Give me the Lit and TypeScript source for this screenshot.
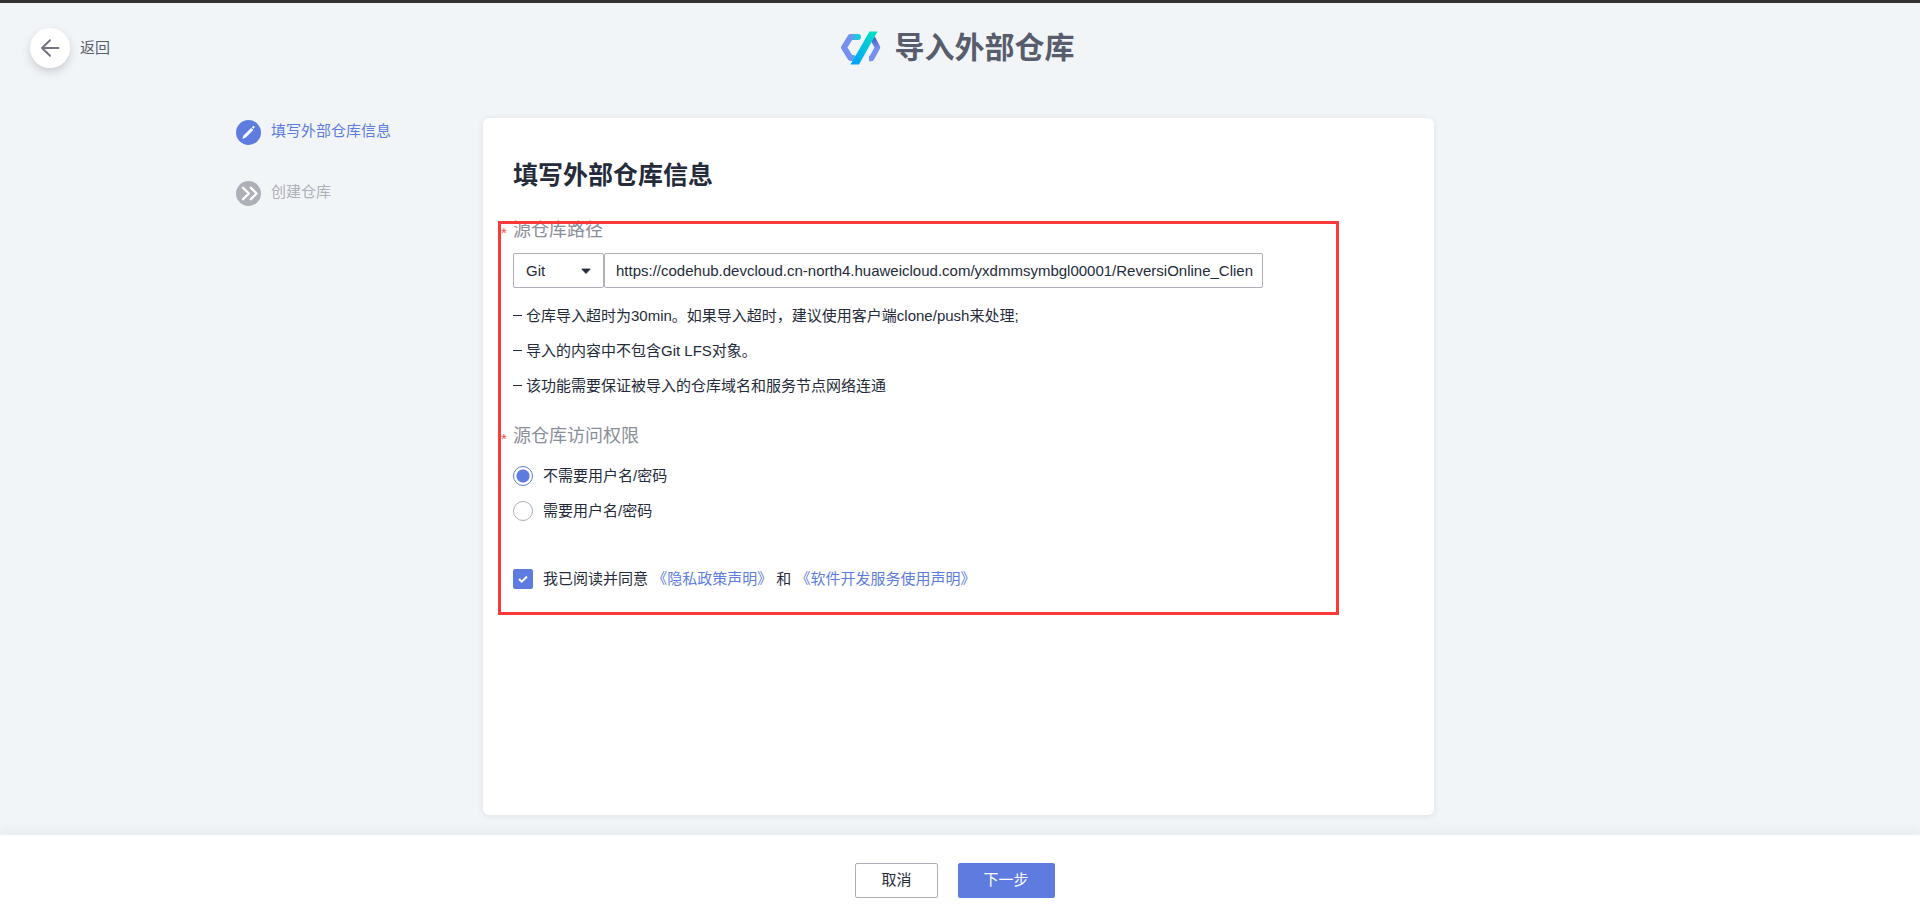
import { LitElement, html, css } from "lit";
import { customElement, state } from "lit/decorators.js";

@customElement("app-root")
export class AppRoot extends LitElement {
  static styles = css`
    :host {
      display: flex;
      flex-direction: column;
      min-height: 100vh;
      box-sizing: border-box;
      border-top: 3px solid #333333;
      background: #f2f5f8;
      color: #252b3a;
      font: 15px/21px "Liberation Sans", "Noto Sans CJK SC", sans-serif;
    }
    *, *::before, *::after { box-sizing: border-box; }
    h1, h2, ul, ol, fieldset, legend, p { margin: 0; padding: 0; border: 0; }
    ul, ol { list-style: none; }
    button, input, select { font: inherit; color: inherit; margin: 0; }
    a { color: #5e7ce0; text-decoration: none; }
    svg { display: block; flex: none; }

    header {
      display: grid;
      grid-template-columns: 1fr auto 1fr;
      align-items: center;
      height: 90px;
      padding: 0 36px 0 30px;
    }
    .back {
      display: flex;
      align-items: center;
      justify-self: start;
      gap: 10px;
      padding: 0;
      border: 0;
      background: none;
      color: #575d6c;
      cursor: pointer;
    }
    .back-text { padding-bottom: 2px; }
    .back-circle {
      display: grid;
      place-items: center;
      width: 40px;
      height: 40px;
      border-radius: 50%;
      background: #fff;
      box-shadow: 0 4px 8px rgba(87, 93, 108, 0.25);
    }
    .brand { display: flex; align-items: center; gap: 14px; }
    .brand h1 { font-size: 30px; line-height: 40px; font-weight: 700; color: #575d6c; }

    main {
      flex: 1;
      display: grid;
      grid-template-columns: 1fr minmax(0, 951px) 1fr;
      padding: 25px 3px 20px 0;
    }
    .steps {
      display: flex;
      flex-direction: column;
      gap: 36px;
      justify-self: end;
      width: 247px;
      padding-top: 2px;
    }
    .step { display: flex; align-items: flex-start; gap: 10px; color: #adb0b8; line-height: 22px; }
    .step.active { color: #5e7ce0; }

    .card {
      background: #fff;
      border-radius: 6px;
      padding: 39px 30px 30px;
      box-shadow: 0 1px 6px rgba(37, 43, 58, 0.1);
    }
    .card h2 { font-size: 25px; line-height: 36px; font-weight: 700; }
    .form {
      position: relative;
      margin-top: 24px;
      width: 750px;
      max-width: 100%;
    }
    .marker {
      position: absolute;
      inset: 4px -76px -26px -15px;
      border: 3px solid #fa3a3a;
      pointer-events: none;
    }
    .label {
      display: flex;
      align-items: center;
      gap: 6px;
      margin-left: -12px;
      font-size: 18px;
      line-height: 26px;
      color: #8a8e99;
    }
    .star { width: 6px; font-size: 15px; line-height: 20px; color: #f5524c; padding-top: 6px; }
    .source { display: flex; margin-top: 10px; }
    .select { display: grid; align-items: center; width: 91px; }
    .select > * { grid-area: 1 / 1; }
    .select svg { justify-self: end; margin-right: 13px; pointer-events: none; }
    select, .url {
      height: 35px;
      border: 1px solid #adb0b8;
      border-radius: 2px;
      background: #fff;
      outline: none;
    }
    select { appearance: none; width: 100%; padding: 0 12px; }
    .url { flex: 1; min-width: 0; padding: 0 6px 0 11px; }
    .notes { margin-top: 10px; }
    .notes li { display: flex; align-items: center; gap: 4px; line-height: 35px; }
    .notes li::before { content: ""; width: 9px; height: 1px; background: #252b3a; }
    .access { margin-top: 20px; }
    .options { display: grid; margin-top: 9px; }
    .option { display: flex; align-items: center; gap: 10px; height: 35px; }
    .option input {
      appearance: none;
      width: 20px;
      height: 20px;
      border: 1px solid #adb0b8;
      border-radius: 50%;
      background: #fff;
    }
    .option input:checked {
      border-color: #5e7ce0;
      background: radial-gradient(circle, #5e7ce0 6px, #fff 7px);
    }
    .agree { display: flex; align-items: center; gap: 10px; margin-top: 40px; }
    .tick { display: grid; place-items: center; width: 20px; height: 20px; }
    .tick > * { grid-area: 1 / 1; }
    .tick input {
      appearance: none;
      width: 20px;
      height: 20px;
      border: 1px solid #adb0b8;
      border-radius: 2px;
    }
    .tick input:checked { border-color: #5e7ce0; background: #5e7ce0; }
    .tick svg { pointer-events: none; }

    footer {
      position: relative;
      display: flex;
      justify-content: center;
      align-items: flex-start;
      gap: 20px;
      height: 89px;
      padding: 28px 10px 0 0;
      background: #fff;
      box-shadow: 0 -2px 12px rgba(37, 43, 58, 0.08);
    }
    .btn {
      height: 35px;
      padding: 0 25px 2px;
      border: 1px solid #adb0b8;
      border-radius: 2px;
      background: #fff;
      cursor: pointer;
    }
    .btn.primary { border-color: #5e7ce0; background: #5e7ce0; color: #fff; }
  `;

  @state() private needsPassword = false;
  @state() private agreed = true;

  render() {
    return html`
      <header>
        <button class="back" type="button">
          <span class="back-circle">
            <svg width="20" height="20" viewBox="0 0 20 20" fill="none" stroke="#71757f" stroke-width="2" stroke-linecap="round" stroke-linejoin="round">
              <path d="M18.5 10H2M10 2.3L2 10l8 7.7" />
            </svg>
          </span>
          <span class="back-text">返回</span>
        </button>
        <div class="brand">
          <svg width="41" height="34" viewBox="0 0 41 34" aria-hidden="true">
            <defs>
              <linearGradient id="slash" x1="0" y1="1" x2="1" y2="0">
                <stop offset="0" stop-color="#009dff" />
                <stop offset="1" stop-color="#00e6c0" />
              </linearGradient>
              <linearGradient id="left" x1="0" y1="0" x2="1" y2="0">
                <stop offset="0.45" stop-color="#7590ee" />
                <stop offset="1" stop-color="#10cfe0" />
              </linearGradient>
              <linearGradient id="right" x1="0" y1="1" x2="0" y2="0">
                <stop offset="0.5" stop-color="#7590ee" />
                <stop offset="1" stop-color="#4a5cc8" />
              </linearGradient>
            </defs>
            <path d="M18 6H10.5L4 16.500L10.5 27H13" fill="none" stroke="url(#left)" stroke-width="6" stroke-linecap="round" stroke-linejoin="round" />
            <path d="M32.500 7L37.500 16.500L31.500 27.500H29" fill="none" stroke="url(#right)" stroke-width="5.5" stroke-linejoin="round" />
            <path d="M29.500 0.500H37.500L19 33.500H10.5Z" fill="url(#slash)" />
          </svg>
          <h1>导入外部仓库</h1>
        </div>
      </header>

      <main>
        <ol class="steps">
          <li class="step active">
            <svg width="25" height="25" viewBox="0 0 25 25">
              <circle cx="12.5" cy="12.5" r="12.5" fill="#5e7ce0" />
              <path d="M6.300 18.900l1.200-3.500 7.600-7.500 2.200 2.200-7.500 7.500zM15.800 7.200l1.100-1c.4-.4 1-.3 1.400.1s.5 1 .1 1.400l-1 1.100z" fill="#fff" />
            </svg>
            <span>填写外部仓库信息</span>
          </li>
          <li class="step">
            <svg width="25" height="25" viewBox="0 0 25 25">
              <circle cx="12.5" cy="12.5" r="12.5" fill="#adb0b8" />
              <path d="M7 6.700l5.800 5.800L7 18.300M14.800 6.700l5.800 5.800-5.800 5.800" fill="none" stroke="#fff" stroke-width="2.300" stroke-linecap="round" stroke-linejoin="round" />
            </svg>
            <span>创建仓库</span>
          </li>
        </ol>

        <section class="card">
          <h2>填写外部仓库信息</h2>
          <form class="form" @submit=${(e: Event) => e.preventDefault()}>
            <label class="label" for="url"><span class="star">*</span>源仓库路径</label>
            <div class="source">
              <div class="select">
                <select aria-label="Git">
                  <option>Git</option>
                </select>
                <svg width="10" height="6" viewBox="0 0 10 6"><path d="M0.800 1H9.200L5 5.500Z" fill="#252b3a" stroke="#252b3a" stroke-width="0.800" stroke-linejoin="round" /></svg>
              </div>
              <input id="url" class="url" type="text" spellcheck="false"
                .value=${"https://codehub.devcloud.cn-north4.huaweicloud.com/yxdmmsymbgl00001/ReversiOnline_Clien"} />
            </div>
            <ul class="notes">
              <li>仓库导入超时为30min。如果导入超时，建议使用客户端clone/push来处理;</li>
              <li>导入的内容中不包含Git LFS对象。</li>
              <li>该功能需要保证被导入的仓库域名和服务节点网络连通</li>
            </ul>
            <fieldset class="access">
              <legend class="label"><span class="star">*</span>源仓库访问权限</legend>
              <div class="options">
                <label class="option">
                  <input type="radio" name="access" .checked=${!this.needsPassword} @change=${() => (this.needsPassword = false)} />
                  不需要用户名/密码
                </label>
                <label class="option">
                  <input type="radio" name="access" .checked=${this.needsPassword} @change=${() => (this.needsPassword = true)} />
                  需要用户名/密码
                </label>
              </div>
            </fieldset>
            <div class="agree">
              <span class="tick">
                <input id="agree" type="checkbox" .checked=${this.agreed} @change=${() => (this.agreed = !this.agreed)} />
                <svg width="12" height="12" viewBox="0 0 12 12"><path d="M2 6l2.700 2.700L10 3.500" fill="none" stroke="#fff" stroke-width="2" /></svg>
              </span>
              <p><label for="agree">我已阅读并同意</label> <a href="#privacy">《隐私政策声明》</a> 和 <a href="#terms">《软件开发服务使用声明》</a></p>
            </div>
            <div class="marker"></div>
          </form>
        </section>
      </main>

      <footer>
        <button class="btn" type="button">取消</button>
        <button class="btn primary" type="button">下一步</button>
      </footer>
    `;
  }
}
